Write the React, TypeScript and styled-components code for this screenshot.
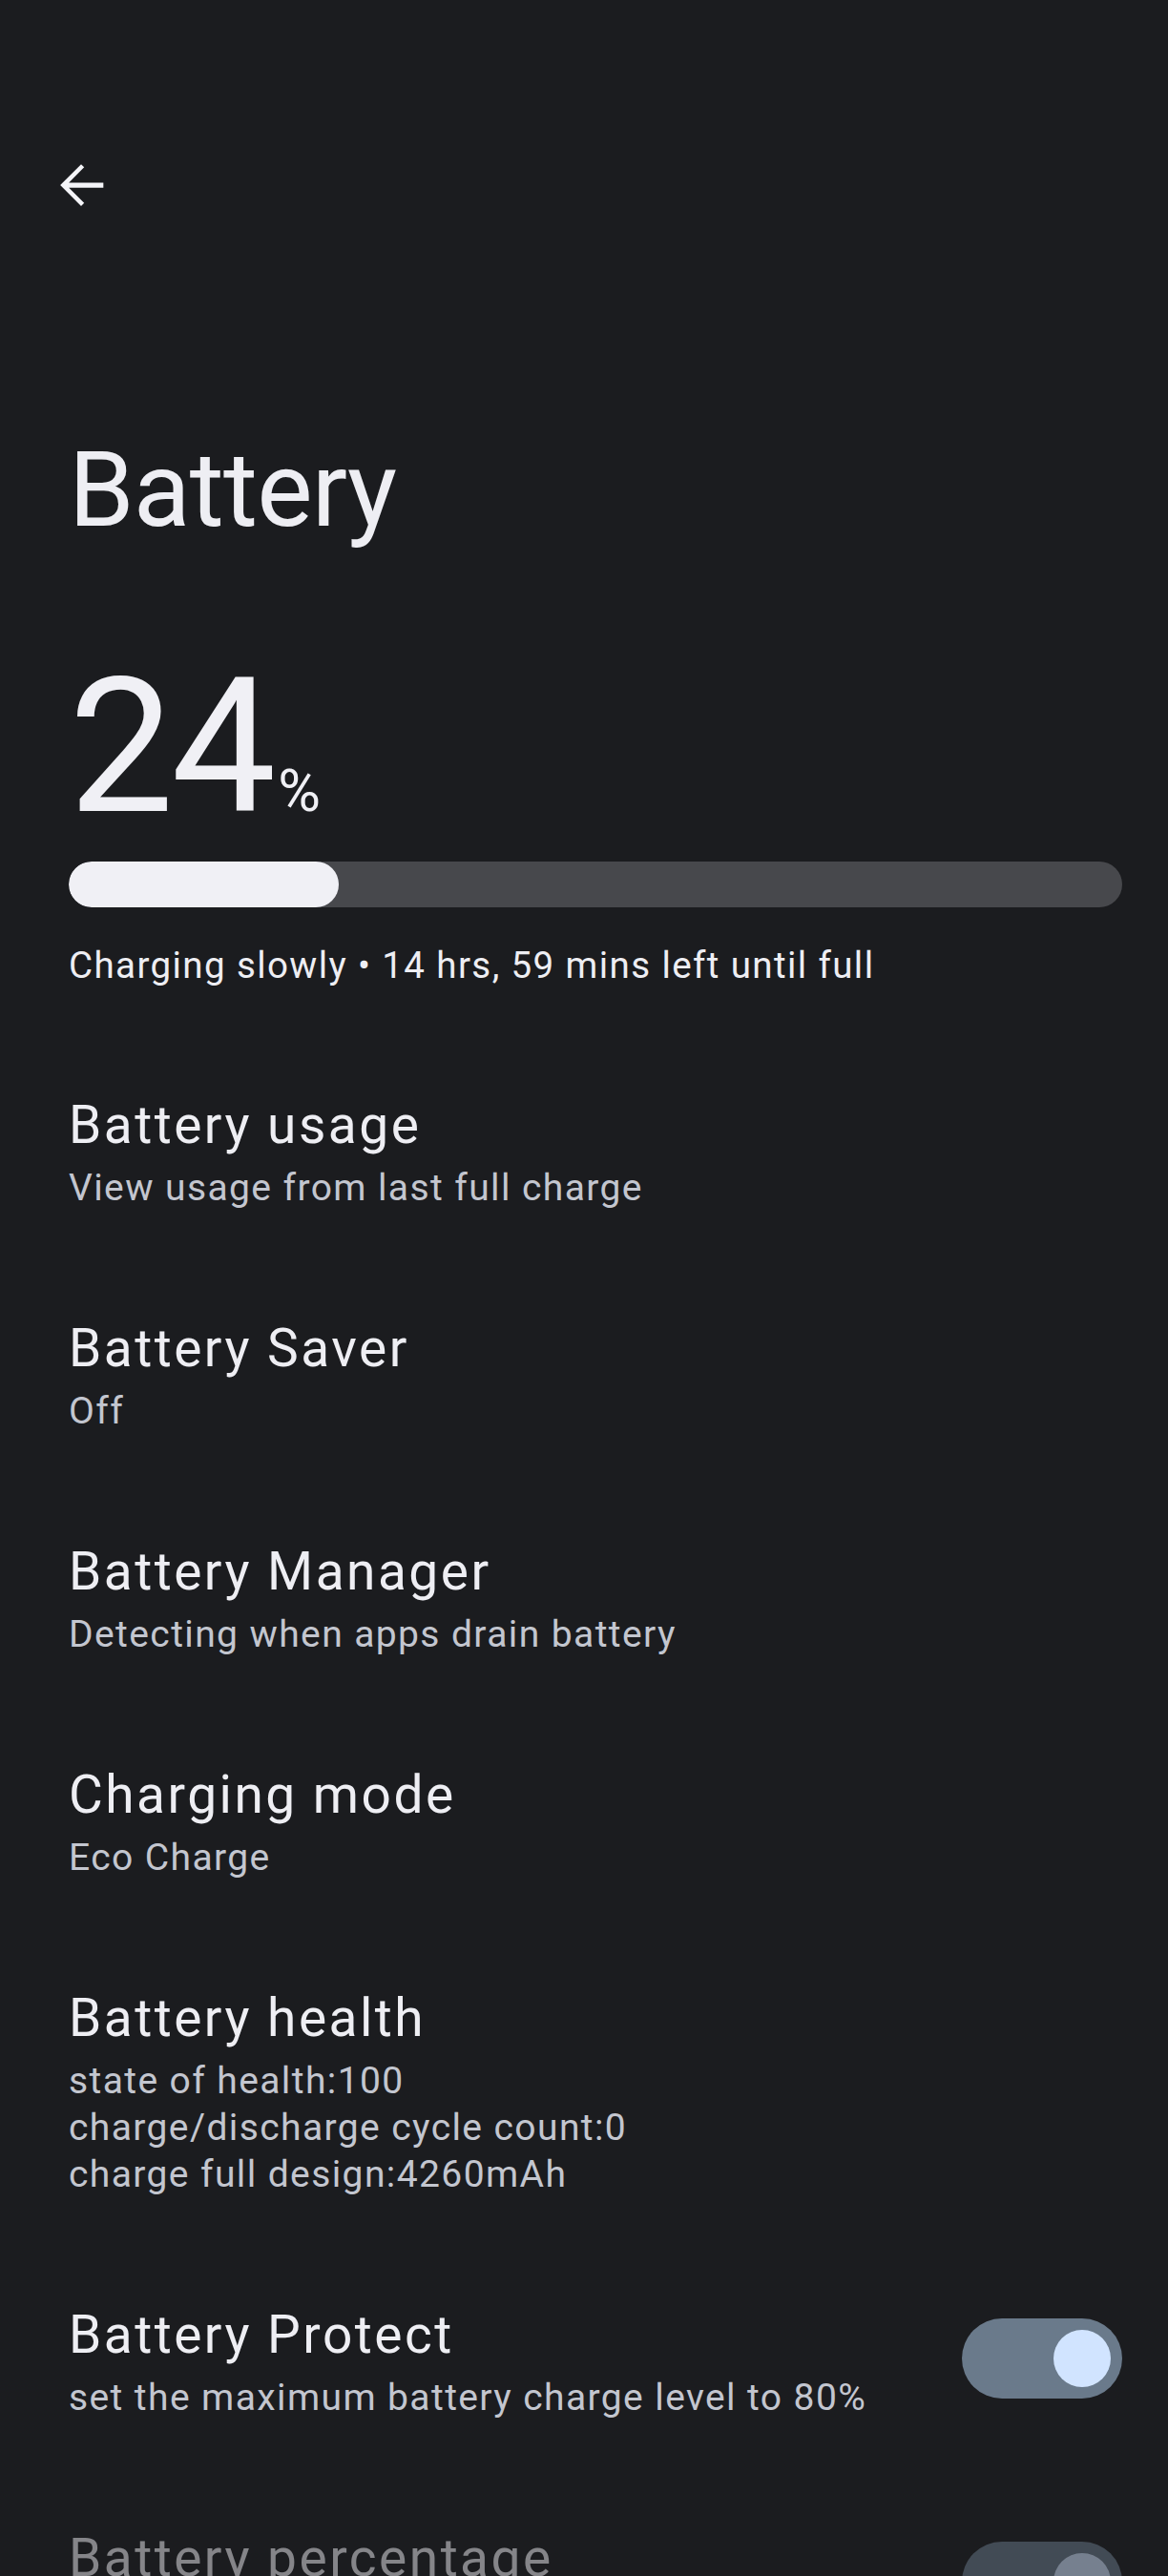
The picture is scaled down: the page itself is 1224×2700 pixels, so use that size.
import styled, { createGlobalStyle } from "styled-components";

const GlobalStyle = createGlobalStyle`
  html, body {
    margin: 0;
    padding: 0;
    background: #1b1c1f;
  }
  body {
    font-family: Roboto, "Noto Sans", sans-serif;
    color: #eeeef3;
    -webkit-font-smoothing: antialiased;
  }
`;

const Page = styled.div`
  width: 1224px;
  min-height: 2700px;
  background: #1b1c1f;
  overflow: hidden;
`;

const Toolbar = styled.div`
  display: flex;
  align-items: center;
  padding: 159px 0 0 50px;
`;

const BackButton = styled.button`
  width: 70px;
  height: 70px;
  padding: 0;
  border: none;
  background: transparent;
  color: #f4f4f8;
  display: flex;
  align-items: center;
  justify-content: center;

  svg {
    width: 70px;
    height: 70px;
    display: block;
  }
`;

const Title = styled.h1`
  margin: 219px 0 0;
  padding-left: 72px;
  font-size: 110px;
  line-height: 132px;
  font-weight: 400;
  letter-spacing: -0.8px;
  color: #eeeef3;
`;

const Level = styled.div`
  margin-top: 105px;
  padding-left: 72px;
  font-size: 196px;
  line-height: 196px;
  font-weight: 400;
  letter-spacing: -3px;
  color: #f0f0f5;
`;

const Percent = styled.span`
  font-size: 61px;
  line-height: 1;
  letter-spacing: 0;
  margin-left: 5px;
`;

const Track = styled.div`
  margin: 22px 48px 0 72px;
  height: 48px;
  border-radius: 24px;
  background: #47484c;
  overflow: hidden;
`;

const Fill = styled.div`
  height: 100%;
  border-radius: 24px;
  background: #f0f0f5;
`;

const Status = styled.p`
  margin: 36px 0 0;
  padding-left: 72px;
  font-size: 38.5px;
  line-height: 49px;
  letter-spacing: 1.4px;
  color: #eeeef3;
`;

const List = styled.div`
  display: flex;
  flex-direction: column;
  margin-top: 55px;
`;

const Row = styled.div<{ $disabled?: boolean }>`
  display: flex;
  align-items: center;
  gap: 40px;
  padding: 55px 48px 55px 72px;
  opacity: ${({ $disabled }) => ($disabled ? 0.5 : 1)};
`;

const RowText = styled.div`
  flex: 1;
  min-width: 0;
  min-height: 124px;
`;

const RowTitle = styled.div`
  font-size: 55px;
  line-height: 66px;
  letter-spacing: 2.5px;
  color: #eeeef3;
`;

const RowSummary = styled.div`
  margin-top: 9px;
  font-size: 39px;
  line-height: 49px;
  letter-spacing: 1.4px;
  color: #c3c6cf;
`;

const Switch = styled.div<{ $on?: boolean }>`
  flex: none;
  width: 168px;
  height: 84px;
  margin-bottom: 8px;
  border-radius: 42px;
  background: #6a7a8b;
  display: flex;
  align-items: center;
  justify-content: ${({ $on }) => ($on ? "flex-end" : "flex-start")};
  padding: 0 12px;
  box-sizing: border-box;

  &::after {
    content: "";
    width: 60px;
    height: 60px;
    border-radius: 50%;
    background: #d1e4ff;
  }
`;

type Pref = {
  title: string;
  summary: string[];
  toggle?: boolean;
  disabled?: boolean;
};

const prefs: Pref[] = [
  { title: "Battery usage", summary: ["View usage from last full charge"] },
  { title: "Battery Saver", summary: ["Off"] },
  { title: "Battery Manager", summary: ["Detecting when apps drain battery"] },
  { title: "Charging mode", summary: ["Eco Charge"] },
  {
    title: "Battery health",
    summary: [
      "state of health:100",
      "charge/discharge cycle count:0",
      "charge full design:4260mAh",
    ],
  },
  {
    title: "Battery Protect",
    summary: ["set the maximum battery charge level to 80%"],
    toggle: true,
  },
  {
    title: "Battery percentage",
    summary: [],
    toggle: true,
    disabled: true,
  },
];

export default function App() {
  const level = 24;
  const fillWidth = `calc(${level}% + 18px)`;

  return (
    <Page>
      <GlobalStyle />
      <Toolbar>
        <BackButton aria-label="Back">
          <svg viewBox="0 0 24 24" fill="currentColor">
            <path d="M20 11.1H7.6l5.5-5.5L12 4.5 4.5 12l7.5 7.5 1.1-1.1-5.5-5.5H20z" />
          </svg>
        </BackButton>
      </Toolbar>

      <Title>Battery</Title>

      <Level>
        {level}
        <Percent>%</Percent>
      </Level>

      <Track>
        <Fill style={{ width: fillWidth }} />
      </Track>

      <Status>Charging slowly • 14 hrs, 59 mins left until full</Status>

      <List>
        {prefs.map((p) => (
          <Row key={p.title} $disabled={p.disabled}>
            <RowText>
              <RowTitle>{p.title}</RowTitle>
              {p.summary.length > 0 && (
                <RowSummary>
                  {p.summary.map((line) => (
                    <div key={line}>{line}</div>
                  ))}
                </RowSummary>
              )}
            </RowText>
            {p.toggle && <Switch $on />}
          </Row>
        ))}
      </List>
    </Page>
  );
}
